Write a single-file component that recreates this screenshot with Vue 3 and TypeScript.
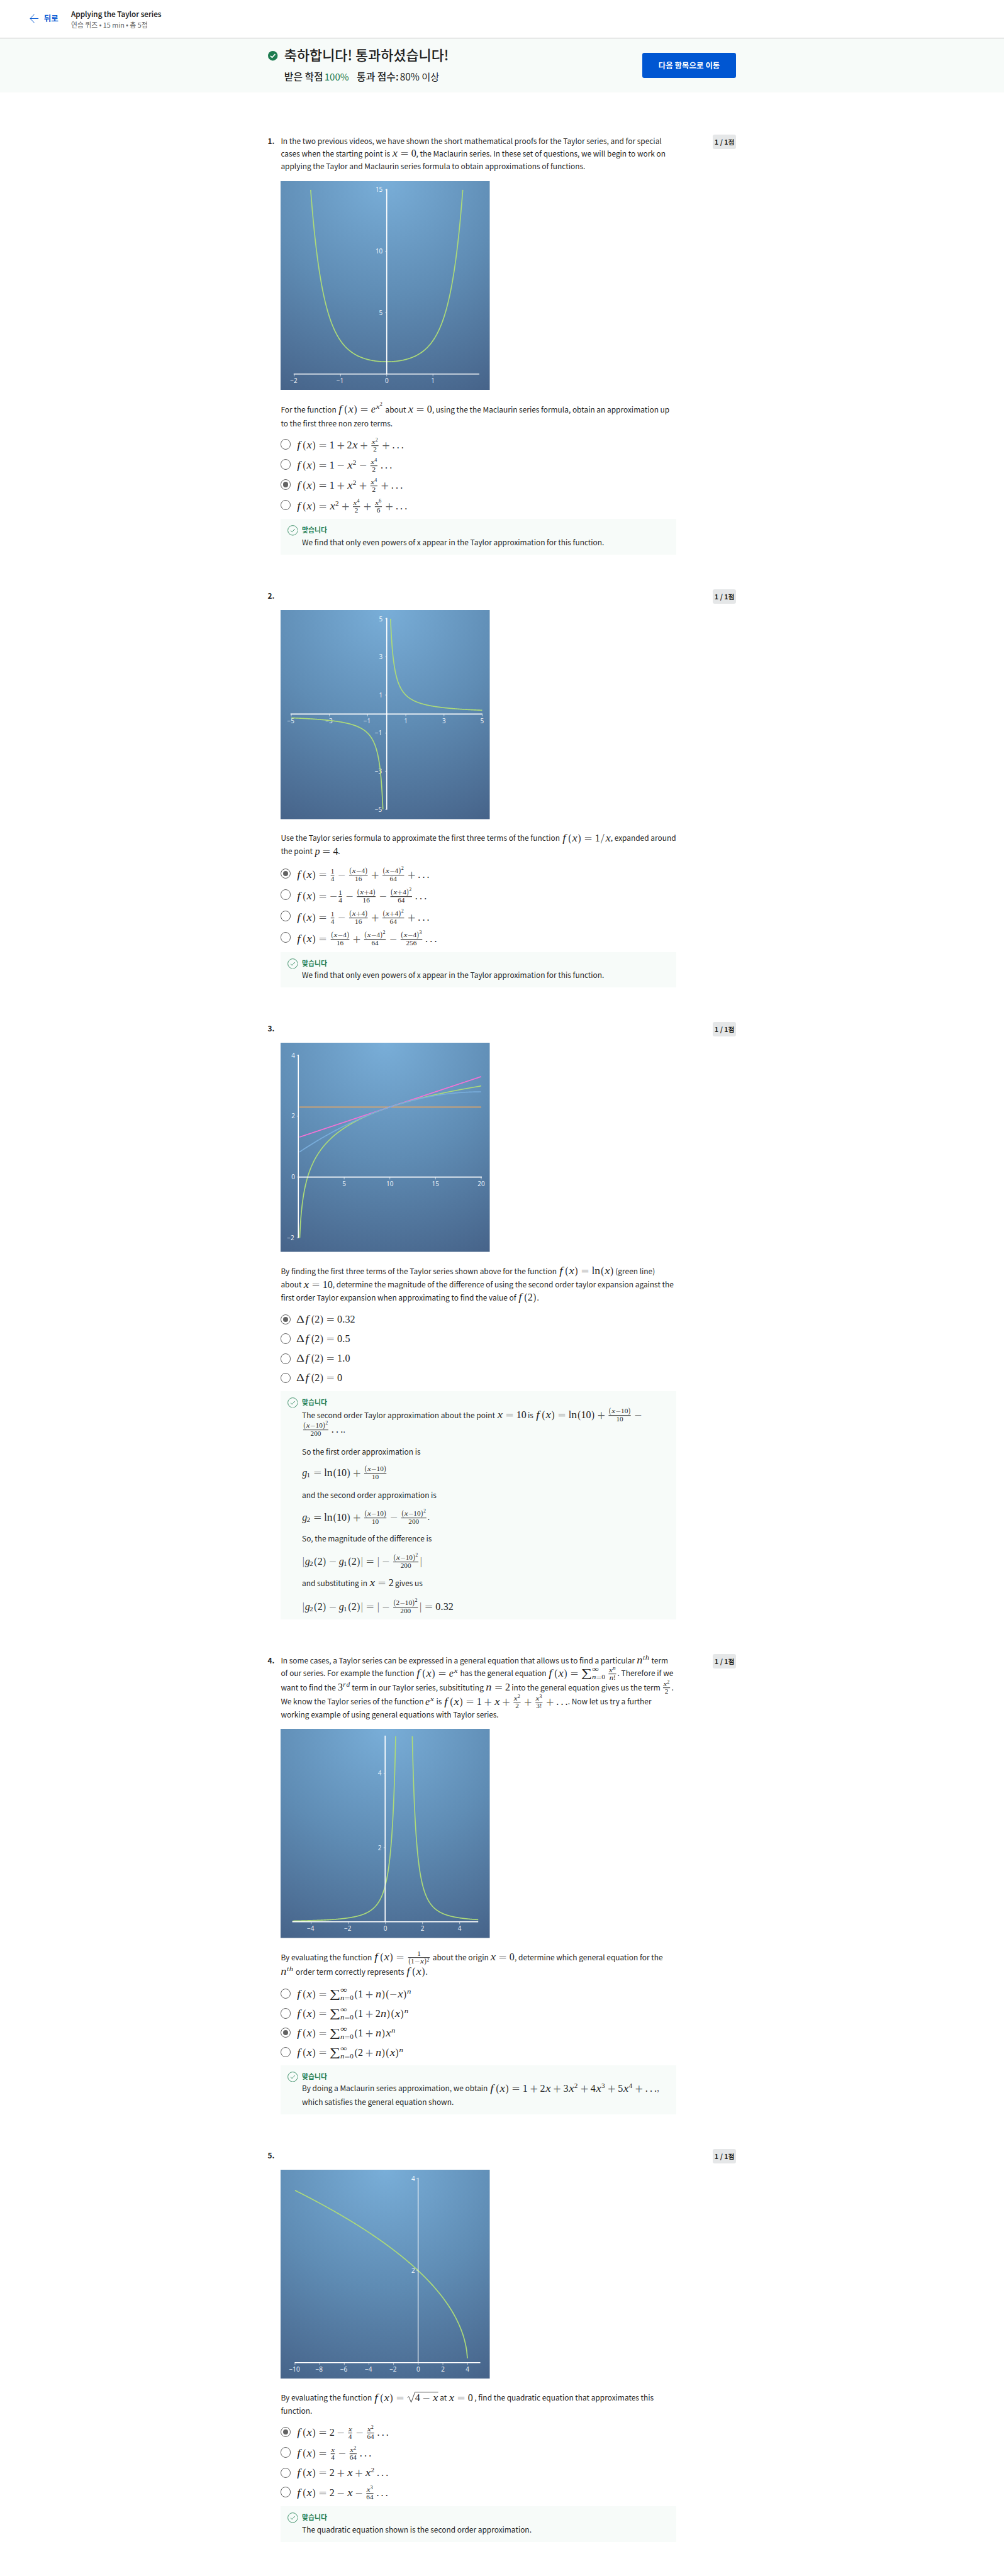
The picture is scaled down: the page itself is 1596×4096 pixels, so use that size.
<script setup lang="ts">
import { defineComponent, h } from 'vue'
import type { VNode } from 'vue'

/* ---------- formula typesetting ---------- */

type Kind = 'ord' | 'rel' | 'bin' | 'open' | 'close' | 'inner' | 'op'
interface Glyph { adv: number; kind?: Kind; italic?: boolean; sx?: number; sy?: number; dx?: number; dy?: number; soft?: boolean }
interface Atom {
  type: 'char' | 'frac' | 'sqrt' | 'dots' | 'ln'
  kind: Kind
  ch?: string
  a?: Atom[]
  b?: Atom[]
  sup?: Atom[]
  sub?: Atom[]
}
interface Mark { x: number; y: number; s: number; t: string; sx: number; sy: number; italic: boolean; soft: boolean; digits: boolean; end: number }
interface Rule { x: number; y: number; w: number }
interface Box { marks: Mark[]; rules: Rule[]; surds: { x: number; w: number }[] }

const glyphs: Record<string, Glyph> = {
  x: { adv: 0.572, italic: true, sx: 1.17, dx: 0.045 },
  f: { adv: 0.597, italic: true, sx: 1.2, dx: 0.07 },
  n: { adv: 0.6, italic: true, sx: 1.14, dx: 0.02 },
  e: { adv: 0.465, italic: true },
  g: { adv: 0.5, italic: true, dx: 0.01 },
  p: { adv: 0.503, italic: true, dx: 0.03 },
  t: { adv: 0.361, italic: true, dx: 0.03 },
  h: { adv: 0.576, italic: true, sx: 1.12 },
  r: { adv: 0.479, italic: true, sx: 1.1 },
  d: { adv: 0.52, italic: true },
  '(': { adv: 0.389, kind: 'open', dx: 0.06, sy: 1.07, sx: 0.88 },
  ')': { adv: 0.389, kind: 'close', dx: 0.04, sy: 1.07, sx: 0.88 },
  '=': { adv: 0.778, kind: 'rel', sx: 1.385, dy: 0.085, soft: true },
  '+': { adv: 0.778, kind: 'bin', sx: 1.385, sy: 1.385, dy: 0.214, soft: true },
  '−': { adv: 0.778, kind: 'bin', sx: 1.3, dx: 0.025, dy: 0.08, soft: true },
  '∑': { adv: 1.056, kind: 'op', sx: 1.5, sy: 1.14 },
  '∞': { adv: 1, sx: 1.35, dx: 0.02, dy: 0.03 },
  'Δ': { adv: 0.833, sx: 1.25, sy: 1.08 },
  '|': { adv: 0.278, dx: 0.04, sy: 1.08, soft: true },
  '/': { adv: 0.5, sx: 1.35, sy: 1.49, dx: 0.06, dy: 0.22, soft: true },
  '!': { adv: 0.278, kind: 'close', dx: -0.03 },
  '.': { adv: 0.278, dx: 0.015 }
}

function parse(src: string): Atom[] {
  let i = 0
  function group(): Atom[] {
    if (src[i] === '{') {
      i++
      const g = list()
      i++
      return g
    }
    return [single()]
  }
  function single(): Atom {
    if (src.startsWith('\\frac', i)) {
      i += 5
      const a = group()
      return { type: 'frac', kind: 'ord', a, b: group() }
    }
    if (src.startsWith('\\sqrt', i)) {
      i += 5
      return { type: 'sqrt', kind: 'ord', a: group() }
    }
    if (src.startsWith('\\ln', i)) {
      i += 3
      return { type: 'ln', kind: 'op' }
    }
    let ch = src[i++]
    if (ch === '…') return { type: 'dots', kind: 'inner' }
    if (ch === '-') ch = '−'
    return { type: 'char', ch, kind: glyphs[ch]?.kind ?? 'ord' }
  }
  function list(): Atom[] {
    const out: Atom[] = []
    while (i < src.length && src[i] !== '}') {
      const atom = single()
      while (src[i] === '^' || src[i] === '_') {
        const key = src[i++] === '^' ? 'sup' : 'sub'
        atom[key] = group()
      }
      const prev = out[out.length - 1]
      if (atom.kind === 'bin' && (!prev || ['rel', 'open', 'bin', 'op'].includes(prev.kind))) atom.kind = 'ord'
      out.push(atom)
    }
    return out
  }
  return list()
}

function glue(a: Kind, b: Kind): number {
  if (a === 'rel' || b === 'rel') return 0.278
  if (a === 'bin' || b === 'bin') return 0.222
  if (a === 'inner' || (b === 'inner' && a !== 'open')) return 0.167
  if (a === 'op' && b === 'ord') return 0.167
  if (b === 'op' && a !== 'open') return 0.167
  return 0
}

const smaller = (s: number) => (s === 1 ? 0.7 : 0.5)

function put(box: Box, ch: string, x: number, y: number, s: number, roman = false): number {
  const g: Glyph = (roman ? { adv: ch === 'l' ? 0.278 : 0.556, sx: ch === 'l' ? 1 : 1.1 } : glyphs[ch]) ?? { adv: 0.5 }
  const digits = /\d/.test(ch)
  const last = box.marks[box.marks.length - 1]
  if (digits && last?.digits && last.s === s && last.y === y && Math.abs(last.end - x) < 0.001) {
    last.t += ch
    last.end = x + g.adv * s
  } else {
    box.marks.push({
      x: x + (g.dx ?? 0) * s, y: y + (g.dy ?? 0) * s, s, t: ch,
      sx: g.sx ?? 1, sy: g.sy ?? 1, italic: !!g.italic, soft: !!g.soft, digits, end: x + g.adv * s
    })
  }
  return x + g.adv * s
}

function lay(box: Box, atoms: Atom[], x0: number, y: number, s: number, low = false): number {
  let x = x0
  atoms.forEach((atom, k) => {
    if (k && s === 1) x += glue(atoms[k - 1].kind, atom.kind)
    if (atom.type === 'frac') {
      const sc = smaller(s)
      const measure = (a: Atom[]) => lay({ marks: [], rules: [], surds: [] }, a, 0, 0, sc)
      const nw = measure(atom.a!)
      const dw = measure(atom.b!)
      const w = Math.max(nw, dw)
      const tall = atom.a!.some((a) => a.ch === '(')
      x += 0.12
      lay(box, atom.a!, x + (w - nw) / 2, y - (tall ? 0.485 : 0.394), sc)
      lay(box, atom.b!, x + (w - dw) / 2, y + 0.345, sc, true)
      box.rules.push({ x, y: y - 0.25, w })
      x += w + 0.12
    } else if (atom.type === 'sqrt') {
      const start = x
      x = lay(box, atom.a!, x + 0.8, y, s)
      box.surds.push({ x: start, w: x - start })
    } else if (atom.type === 'dots') {
      for (let d = 0; d < 3; d++) x = put(box, '.', x, y, s) + (d < 2 ? 0.167 : 0)
    } else if (atom.type === 'ln') {
      x = put(box, 'l', x, y, s, true)
      x = put(box, 'n', x, y, s, true)
    } else {
      x = put(box, atom.ch!, x, y, s)
    }
    if (atom.sup || atom.sub) {
      const big = atom.ch === '∑'
      const lift = big ? 0.503 : s === 1 ? 0.363 : low ? 0.2 : 0.29
      let end = x
      if (atom.sup) end = Math.max(end, lay(box, atom.sup, x, y - lift, smaller(s)))
      if (atom.sub) end = Math.max(end, lay(box, atom.sub, x - (atom.ch === 'g' ? 0.036 : 0), y + (big ? 0.3 : 0.15), smaller(s)))
      x = end + 0.05
    }
  })
  return x
}

const EM = 19.36

const Formula = defineComponent({
  props: { src: { type: String, required: true } },
  setup(props) {
    return () => {
      const box: Box = { marks: [], rules: [], surds: [] }
      const w = lay(box, parse(props.src), 0, 0, 1) * EM
      const kids: VNode[] = box.marks.map((m) =>
        h('text', {
          transform: `translate(${(m.x * EM).toFixed(2)} ${(2 + m.y * EM).toFixed(2)}) scale(${m.sx} ${m.sy})`,
          'font-size': (m.s * EM).toFixed(2),
          'font-style': m.italic ? 'italic' : 'normal',
          'fill-opacity': m.soft ? 0.75 : 1
        }, m.t)
      )
      box.rules.forEach((r) =>
        kids.push(h('rect', { x: r.x * EM, y: 2 + r.y * EM - 0.5, width: r.w * EM, height: 1.1 }))
      )
      box.surds.forEach((q) => {
        const x = q.x * EM
        kids.push(h('path', {
          d: `M${x + 1} ${-4.2}l2.6 -2.2l4.6 11.2l7.3 -19.6H${x + q.w * EM}`,
          fill: 'none', stroke: '#1f1f1f', 'stroke-width': 0.95
        }))
      })
      return h('svg', { class: 'formula', width: w.toFixed(2), height: 2 }, kids)
    }
  }
})

/* ---------- plots ---------- */

interface Tick { at: number; label: string }
interface Curve { d: string; color: string }
interface Plot { xAxis: [number, number, number]; yAxis: [number, number, number]; xTicks: Tick[]; yTicks: Tick[]; curves: Curve[]; labelY: number; labelX: number; thin?: boolean }

function trace(fn: (x: number) => number, from: number, to: number, px: (x: number) => number, py: (y: number) => number): string {
  const pts: string[] = []
  const steps = 240
  for (let i = 0; i <= steps; i++) {
    const x = from + ((to - from) * i) / steps
    pts.push(`${px(x).toFixed(2)} ${py(fn(x)).toFixed(2)}`)
  }
  return 'M' + pts.join('L')
}
const fmt = (v: number) => String(v).replace('-', '−')
const ticks = (vals: number[], p: (v: number) => number): Tick[] => vals.map((v) => ({ at: p(v), label: fmt(v) }))
const lin = (origin: number, unit: number) => (v: number) => origin + v * unit

const GREEN = '#addb78'
const p1x = lin(203, 88.4), p1y = lin(369, -23.49)
const p2x = lin(203, 36.5), p2y = lin(199, -36.46)
const p3x = lin(34.3, 17.47), p3y = lin(256.9, -58.17)
const p4x = lin(200.5, 35.5), p4y = lin(369.5, -71.1)
const p5x = lin(263.3, 23.57), p5y = lin(369.7, -88.25)

const plots: Plot[] = [
  {
    xAxis: [25, 380, 369], yAxis: [15, 369, 203], labelY: 386.3, labelX: 195.3,
    xTicks: ticks([-2, -1, 0, 1], p1x), yTicks: ticks([5, 10, 15], p1y),
    curves: [{ color: GREEN, d: trace((x) => Math.exp(x * x), -1.6456, 1.6456, p1x, p1y) }]
  },
  {
    xAxis: [19, 386, 199], yAxis: [15, 382, 203], labelY: 216.3, labelX: 195.3,
    xTicks: ticks([-5, -3, -1, 1, 3, 5], p2x), yTicks: ticks([-5, -3, -1, 1, 3, 5], p2y),
    curves: [
      { color: GREEN, d: trace((x) => 1 / x, 0.2, 5, p2x, p2y) },
      { color: GREEN, d: trace((x) => 1 / x, -5, -0.2, p2x, p2y) }
    ]
  },
  {
    xAxis: [34, 385, 257], yAxis: [23, 373.5, 34], labelY: 274, labelX: 27.5,
    xTicks: ticks([5, 10, 15, 20], p3x), yTicks: ticks([-2, 0, 2, 4], p3y),
    curves: [
      { color: GREEN, d: trace((t) => t, -2, 2.9957, (t) => p3x(Math.exp(t)), p3y) },
      { color: '#e9a660', d: trace(() => 2.3026, 0.1, 20, p3x, p3y) },
      { color: '#f772d6', d: trace((x) => 2.3026 + (x - 10) / 10, 0.1, 20, p3x, p3y) },
      { color: '#79addb', d: trace((x) => 2.3026 + (x - 10) / 10 - (x - 10) ** 2 / 200, 0.1, 20, p3x, p3y) }
    ]
  },
  {
    xAxis: [22.3, 378, 369], yAxis: [13, 369, 200], labelY: 385.8, labelX: 193,
    xTicks: ticks([-4, -2, 0, 2, 4], p4x), yTicks: ticks([2, 4], p4y),
    curves: [
      { color: GREEN, d: trace((x) => 1 / (1 - x) ** 2, -5, 0.5528, p4x, p4y) },
      { color: GREEN, d: trace((x) => 1 / (1 - x) ** 2, 1.4472, 5, p4x, p4y) }
    ]
  },
  {
    xAxis: [27, 382, 369], yAxis: [15.3, 369, 263], labelY: 386, labelX: 257, thin: true,
    xTicks: ticks([-10, -8, -6, -4, -2, 0, 2, 4], p5x), yTicks: ticks([2, 4], p5y),
    curves: [{ color: GREEN, d: trace((x) => Math.sqrt(4 - x), -10, 3.99, p5x, p5y) }]
  }
]

/* ---------- content ---------- */

/** A line of copy; formulas sit between dollar signs, gap is the extra space above. */
type Line = [gap: number, text: string]
/** An answer: extra space above, formula, drop from circle centre to formula baseline. */
type Answer = [gap: number, src: string, drop: number]
interface Question { before: number; intro: Line[]; prompt: Line[]; answers: Answer[]; chosen: number; boxGap: number; feedback: Line[] }

const questions: Question[] = [
  {
    before: 80,
    intro: [
      [0, 'In the two previous videos, we have shown the short mathematical proofs for the Taylor series, and for special'],
      [0, 'cases when the starting point is $x=0$, the Maclaurin series. In these set of questions, we will begin to work on'],
      [1, 'applying the Taylor and Maclaurin series formula to obtain approximations of functions.']
    ],
    prompt: [
      [25, 'For the function $f(x)=e^{x^2}$ about $x=0$, using the the Maclaurin series formula, obtain an approximation up'],
      [2, 'to the first three non zero terms.']
    ],
    answers: [
      [19, 'f(x)=1+2x+\\frac{x^2}{2}+…', 6.8],
      [18, 'f(x)=1-x^2-\\frac{x^4}{2}…', 7.8],
      [19, 'f(x)=1+x^2+\\frac{x^4}{2}+…', 7.8],
      [19, 'f(x)=x^2+\\frac{x^4}{2}+\\frac{x^6}{6}+…', 8.2]
    ],
    chosen: 2,
    boxGap: 17,
    feedback: [[0, 'We find that only even powers of x appear in the Taylor approximation for this function.']]
  },
  {
    before: 66,
    intro: [[0, '']],
    prompt: [
      [24, 'Use the Taylor series formula to approximate the first three terms of the function $f(x)=1/x$, expanded around'],
      [1, 'the point $p=4$.']
    ],
    answers: [
      [21, 'f(x)=\\frac{1}{4}-\\frac{(x-4)}{16}+\\frac{(x-4)^2}{64}+…', 8],
      [20, 'f(x)=-\\frac{1}{4}-\\frac{(x+4)}{16}-\\frac{(x+4)^2}{64}…', 9.5],
      [21, 'f(x)=\\frac{1}{4}-\\frac{(x+4)}{16}+\\frac{(x+4)^2}{64}+…', 9],
      [21, 'f(x)=\\frac{(x-4)}{16}+\\frac{(x-4)^2}{64}-\\frac{(x-4)^3}{256}…', 9]
    ],
    chosen: 0,
    boxGap: 18,
    feedback: [[0, 'We find that only even powers of x appear in the Taylor approximation for this function.']]
  },
  {
    before: 66,
    intro: [[0, '']],
    prompt: [
      [24, 'By finding the first three terms of the Taylor series shown above for the function $f(x)=\\ln(x)$ (green line)'],
      [2, 'about $x=10$, determine the magnitude of the difference of using the second order taylor expansion against the'],
      [1, 'first order Taylor expansion when approximating to find the value of $f(2)$.']
    ],
    answers: [
      [20, 'Δf(2)=0.32', 5.7],
      [17, 'Δf(2)=0.5', 6],
      [18, 'Δf(2)=1.0', 5.8],
      [17, 'Δf(2)=0', 6]
    ],
    chosen: 0,
    boxGap: 15,
    feedback: [
      [2, 'The second order Taylor approximation about the point $x=10$ is $f(x)=\\ln(10)+\\frac{(x-10)}{10}-$'],
      [3.5, '$\\frac{(x-10)^2}{200}…$.'],
      [18, 'So the first order approximation is'],
      [17, '$g_1=\\ln(10)+\\frac{(x-10)}{10}$'],
      [18, 'and the second order approximation is'],
      [19, '$g_2=\\ln(10)+\\frac{(x-10)}{10}-\\frac{(x-10)^2}{200}$.'],
      [17, 'So, the magnitude of the difference is'],
      [20, '$|g_2(2)-g_1(2)|=|-\\frac{(x-10)^2}{200}|$'],
      [17, 'and substituting in $x=2$ gives us'],
      [21.5, '$|g_2(2)-g_1(2)|=|-\\frac{(2-10)^2}{200}|=0.32$']
    ]
  },
  {
    before: 66,
    intro: [
      [0, 'In some cases, a Taylor series can be expressed in a general equation that allows us to find a particular $n^{th}$ term'],
      [1, 'of our series. For example the function $f(x)=e^x$ has the general equation $f(x)=∑_{n=0}^∞\\frac{x^n}{n!}$. Therefore if we'],
      [3, 'want to find the $3^{rd}$ term in our Taylor series, subsitituting $n=2$ into the general equation gives us the term $\\frac{x^2}{2}$.'],
      [3, 'We know the Taylor series of the function $e^x$ is $f(x)=1+x+\\frac{x^2}{2}+\\frac{x^3}{3!}+…$. Now let us try a further'],
      [1, 'working example of using general equations with Taylor series.']
    ],
    prompt: [
      [24, 'By evaluating the function $f(x)=\\frac{1}{(1-x)^2}$ about the origin $x=0$, determine which general equation for the'],
      [4, '$n^{th}$ order term correctly represents $f(x)$.']
    ],
    answers: [
      [20, 'f(x)=∑_{n=0}^∞(1+n)(-x)^n', 6.5],
      [18, 'f(x)=∑_{n=0}^∞(1+2n)(x)^n', 6],
      [17, 'f(x)=∑_{n=0}^∞(1+n)x^n', 6.2],
      [17, 'f(x)=∑_{n=0}^∞(2+n)(x)^n', 6.5]
    ],
    chosen: 2,
    boxGap: 15,
    feedback: [
      [0, 'By doing a Maclaurin series approximation, we obtain $f(x)=1+2x+3x^2+4x^3+5x^4+…$,'],
      [2.5, 'which satisfies the general equation shown.']
    ]
  },
  {
    before: 65.5,
    intro: [[0, '']],
    prompt: [
      [24, 'By evaluating the function $f(x)=\\sqrt{4-x}$ at $x=0$ , find the quadratic equation that approximates this'],
      [1, 'function.']
    ],
    answers: [
      [19, 'f(x)=2-\\frac{x}{4}-\\frac{x^2}{64}…', 7.2],
      [19, 'f(x)=\\frac{x}{4}-\\frac{x^2}{64}…', 6.8],
      [19, 'f(x)=2+x+x^2…', 6],
      [17, 'f(x)=2-x-\\frac{x^3}{64}…', 7.8]
    ],
    chosen: 0,
    boxGap: 17,
    feedback: [[0, 'The quadratic equation shown is the second order approximation.']]
  }
]

const Copy = defineComponent({
  props: { lines: { type: Array as () => Line[], required: true } },
  setup(props) {
    return () =>
      h('div', { class: 'copy' }, props.lines.map(([gap, text]) =>
        h('div', { class: 'copy-line', style: { marginTop: gap + 'px' } },
          text.split('$').map((part, i) => (i % 2 ? h(Formula, { src: part }) : part)))
      ))
  }
})
</script>

<template>
  <div class="page">
    <header class="topbar">
      <a class="back">
        <svg width="18" height="18" viewBox="0 0 18 18"><path d="M17 9H1.2M9 1L1.2 9L9 17" fill="none" stroke="#0056d2" stroke-width="1.2" /></svg>
        <span>뒤로</span>
      </a>
      <div class="topbar-text">
        <div class="topbar-title">Applying the Taylor series</div>
        <div class="topbar-sub">연습 퀴즈 • 15 min • 총 5점</div>
      </div>
    </header>

    <section class="banner">
      <div class="banner-inner">
        <svg class="pass-icon" width="18.5" height="18.5" viewBox="0 0 18 18">
          <circle cx="9" cy="9" r="9" fill="#1d7c50" />
          <path d="M4.6 9.2L7.7 12.2L13.4 6" fill="none" stroke="#fff" stroke-width="1.9" />
        </svg>
        <div class="banner-text">
          <div class="banner-title">축하합니다! 통과하셨습니다!</div>
          <div class="banner-scores">
            <span class="ko">받은 학점</span>
            <span class="grade">100%</span>
            <span class="ko need">통과 점수:</span>
            <span class="min">80% 이상</span>
          </div>
        </div>
        <button class="next">다음 항목으로 이동</button>
      </div>
    </section>

    <main class="quiz">
      <section v-for="(q, qi) in questions" :key="qi" class="question" :style="{ marginTop: q.before + 'px' }">
        <div class="number">{{ qi + 1 }}.</div>
        <div class="body">
          <Copy :lines="q.intro" />
          <svg class="plot" width="400" height="400" viewBox="0 0 400 400">
            <defs>
              <radialGradient :id="'sky' + qi" gradientUnits="userSpaceOnUse" cx="200" cy="0" r="447">
                <stop offset="0" stop-color="#79aed8" />
                <stop offset="0.5" stop-color="#5f8cb4" />
                <stop offset="1" stop-color="#466389" />
              </radialGradient>
            </defs>
            <rect width="400" height="400" :fill="`url(#sky${qi})`" />
            <g class="tick-text">
              <text v-for="t in plots[qi].xTicks" :key="'x' + t.label" :x="t.at - (t.label.length > 1 && t.label[0] === '−' ? 1 : 0)" :y="plots[qi].labelY" text-anchor="middle">{{ t.label }}</text>
              <text v-for="t in plots[qi].yTicks" :key="'y' + t.label" :x="plots[qi].labelX - (t.label[0] === '−' ? 1.5 : 0)" :y="t.at + 4.4" text-anchor="end">{{ t.label }}</text>
            </g>
            <g stroke="#fff" stroke-opacity="0.75" stroke-width="1">
              <line v-for="t in plots[qi].xTicks" :key="'tx' + t.label" :x1="t.at" :x2="t.at" :y1="plots[qi].xAxis[2]" :y2="plots[qi].xAxis[2] + 4.5" />
              <line v-for="t in plots[qi].yTicks" :key="'ty' + t.label" :x1="plots[qi].yAxis[2] - 3" :x2="plots[qi].yAxis[2]" :y1="t.at" :y2="t.at" />
            </g>
            <path v-for="(c, ci) in plots[qi].curves" :key="ci" :d="c.d" fill="none" :stroke="c.color" stroke-width="2" />
            <line :x1="plots[qi].xAxis[0]" :x2="plots[qi].xAxis[1]" :y1="plots[qi].xAxis[2]" :y2="plots[qi].xAxis[2]" stroke="#fff" stroke-width="2" />
            <line :x1="plots[qi].yAxis[2]" :x2="plots[qi].yAxis[2]" :y1="plots[qi].yAxis[0]" :y2="plots[qi].yAxis[1]" stroke="#fff" :stroke-width="plots[qi].thin ? 1.5 : 2" />
          </svg>
          <Copy :lines="q.prompt" />
          <div v-for="(a, ai) in q.answers" :key="ai" class="answer" :style="{ marginTop: a[0] + 'px' }">
            <span class="radio"><i v-if="ai === q.chosen" class="dot"></i></span>
            <span class="answer-math" :style="{ paddingTop: 8 + a[2] + 'px' }"><Formula :src="a[1]" /></span>
          </div>
          <div class="feedback" :style="{ marginTop: q.boxGap + 'px' }">
            <svg class="ok" width="20" height="20" viewBox="0 0 20 20">
              <circle cx="10" cy="10" r="9.3" fill="none" stroke="#1d7c50" stroke-width="1" />
              <path d="M5.9 10.4L8.7 13L14.2 7.2" fill="none" stroke="#1d7c50" stroke-width="1" />
            </svg>
            <div>
              <div class="verdict">맞습니다</div>
              <Copy :lines="q.feedback" />
            </div>
          </div>
        </div>
        <div class="points">1 / 1점</div>
      </section>
    </main>
  </div>
</template>

<style>
body {
  background: #fff;
}
.copy-line {
  height: 24px;
  line-height: 24px;
  white-space: pre;
  font-size: 14.34px;
}
.formula {
  display: inline-block;
  overflow: visible;
  vertical-align: baseline;
  font-family: "Liberation Serif", "DejaVu Serif", serif;
  fill: #1f1f1f;
}
</style>

<style scoped>
.page {
  zoom: 0.83125;
  width: 1920px;
  min-height: 4927px;
  box-sizing: border-box;
  padding-bottom: 64px;
  font-family: "Noto Sans CJK KR", "Open Sans", sans-serif;
  color: #1f1f1f;
}
.topbar {
  display: flex;
  height: 72px;
  border-bottom: 1px solid #bdbdbd;
}
.back {
  display: flex;
  align-items: center;
  width: 79px;
  margin-left: 57px;
  color: #0056d2;
  font-size: 15.03px;
  font-weight: 700;
  gap: 9px;
}
.back span {
  line-height: 20px;
  padding-bottom: 2px;
}
.topbar-text {
  padding-top: 16.4px;
  line-height: 20px;
}
.topbar-title {
  font-size: 14.12px;
  font-weight: 500;
  -webkit-text-stroke: 0.2px #1f1f1f;
}
.topbar-sub {
  margin-top: 1.2px;
  font-size: 13.02px;
  color: #636363;
}
.banner {
  height: 104px;
  background: #f7fbf9;
}
.banner-inner {
  display: flex;
  width: 896px;
  margin: 0 auto;
}
.pass-icon {
  margin: 24.7px 12.4px 0 0.7px;
}
.banner-text {
  flex: 1;
  padding-top: 14px;
}
.banner-title {
  height: 36px;
  line-height: 36px;
  font-size: 26.34px;
  font-weight: 500;
}
.banner-scores {
  display: flex;
  align-items: baseline;
  height: 24px;
  margin-top: 11px;
  line-height: 24px;
  font-size: 18.1px;
  white-space: pre;
}
.ko {
  font-size: 19.06px;
  font-weight: 500;
}
.grade {
  margin-left: 2.5px;
  color: #1d7c50;
}
.need {
  margin-left: 15px;
}
.min {
  margin-left: 2.5px;
  font-size: 18.4px;
}
.next {
  width: 180px;
  height: 48px;
  margin-top: 28px;
  padding: 0 0 1px;
  border: 0;
  border-radius: 4px;
  background: #0056d2;
  color: #fff;
  font: 700 15.03px "Noto Sans CJK KR", sans-serif;
}
.quiz {
  width: 896px;
  margin: 0 auto;
}
.question {
  display: flex;
  align-items: flex-start;
}
.number {
  width: 25px;
  height: 24px;
  line-height: 24px;
  font-size: 14.34px;
  font-weight: 700;
}
.body {
  width: 756px;
}
.plot {
  display: block;
  margin-top: 16px;
}
.tick-text {
  font-family: "Open Sans", sans-serif;
  font-size: 12px;
  fill: #f4f8fc;
}
.points {
  width: 45px;
  height: 28px;
  margin-left: auto;
  border-radius: 4px;
  background: #e5e7e8;
  font-size: 12.97px;
  font-weight: 700;
  line-height: 27px;
  text-align: center;
}
.answer {
  display: flex;
  height: 20px;
  margin-left: -1px;
}
.radio {
  display: flex;
  align-items: center;
  justify-content: center;
  width: 20px;
  height: 20px;
  box-sizing: border-box;
  border: 2px solid #636363;
  border-radius: 50%;
}
.dot {
  width: 10px;
  height: 10px;
  border-radius: 50%;
  background: #636363;
}
.answer-math {
  height: 2px;
  margin-left: 10.5px;
  line-height: 0;
  font-size: 0;
}
.feedback {
  display: flex;
  padding: 12px 0 12px 12.5px;
  background: #f7fbf9;
}
.ok {
  flex: none;
  margin-right: 8px;
}
.verdict {
  height: 20px;
  line-height: 19px;
  font-size: 13.06px;
  font-weight: 700;
  color: #1d7c50;
}
</style>
